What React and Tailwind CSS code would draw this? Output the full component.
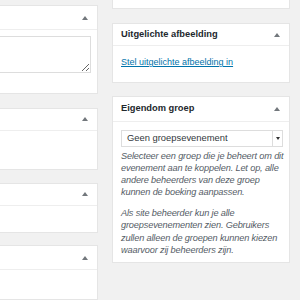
import React from "react";

const Arrow = () => (
  <svg width="6" height="4" viewBox="0 0 6 4" className="shrink-0">
    <path d="M0 4 L3 0 L6 4 Z" fill="#72777c" />
  </svg>
);

function Box({ headerH, children, className = "" }) {
  return (
    <div className={`bg-white border border-[#e5e5e5] ${className}`}>
      <div className={`flex items-center justify-end pr-[9px] border-b border-[#eeeeee] ${headerH}`}>
        <Arrow />
      </div>
      {children}
    </div>
  );
}

const Lines = ({ lines, className }) => (
  <p className={className}>
    {lines.map((l) => (
      <span key={l} className="block whitespace-nowrap">{l}</span>
    ))}
  </p>
);

export default function App() {
  return (
    <div
      className="w-[300px] h-[300px] overflow-hidden bg-[#f1f1f1] flex"
      style={{ fontFamily: '"Liberation Sans", Arial, sans-serif' }}
    >
      <div className="w-[198px] ml-[-100px] shrink-0 flex flex-col">
        <Box headerH="h-[24px]" className="mt-[5px] h-[97px]">
          <div className="pt-[6px] pl-[8px] pr-[6px]">
            <textarea className="block w-full h-[37px] border border-[#dddddd] bg-white resize-y" />
          </div>
        </Box>
        <Box headerH="h-[22px]" className="mt-[14px] h-[68px]" />
        <Box headerH="h-[22px]" className="mt-[13px] h-[55px]" />
        <Box headerH="h-[24px]" className="mt-[12px] h-[60px]" />
      </div>
      <div className="w-[178px] ml-[14px] shrink-0 flex flex-col">
        <div className="bg-white border border-[#e5e5e5] h-[10px] mt-[-1px]" />
        <div className="bg-white border border-[#e5e5e5] mt-[14px] h-[60px]">
          <div className="flex items-center justify-between pl-[8px] pr-[9px] h-[22px] border-b border-[#eeeeee]">
            <span className="text-[9.3px] font-semibold text-[#23282d] leading-none">Uitgelichte afbeelding</span>
            <Arrow />
          </div>
          <div className="pl-[8px] pt-[11px] leading-none">
            <a className="block text-[9px] text-[#0073aa] underline leading-[10px]">Stel uitgelichte afbeelding in</a>
          </div>
        </div>
        <div className="bg-white border border-[#e5e5e5] mt-[13px] h-[167px]">
          <div className="flex items-center justify-between pl-[8px] pr-[9px] h-[25px] border-b border-[#eeeeee]">
            <span className="text-[9.3px] font-semibold text-[#23282d] leading-none">Eigendom groep</span>
            <Arrow />
          </div>
          <div className="pl-[8px] pr-[2px] pt-[8px]">
            <div className="flex h-[17px] mr-[4px] border border-[#dddddd] bg-white">
              <div className="flex-1 flex items-center pl-[5px] text-[9.4px] text-[#32373c]">Geen groepsevenement</div>
              <div className="w-[10px] border-l border-[#dddddd] flex items-center justify-center">
                <svg width="4" height="3" viewBox="0 0 4 3"><path d="M0 0 L4 0 L2 3 Z" fill="#333" /></svg>
              </div>
            </div>
            <Lines
              className="mt-[3px] text-[9.2px] tracking-[-0.15px] italic text-[#555d66] leading-[12px]"
              lines={[
                "Selecteer een groep die je beheert om dit",
                "evenement aan te koppelen. Let op, alle",
                "andere beheerders van deze groep",
                "kunnen de boeking aanpassen.",
              ]}
            />
            <Lines
              className="mt-[9px] text-[9.2px] tracking-[-0.15px] italic text-[#555d66] leading-[12.3px]"
              lines={[
                "Als site beheerder kun je alle",
                "groepsevenementen zien. Gebruikers",
                "zullen alleen de groepen kunnen kiezen",
                "waarvoor zij beheerders zijn.",
              ]}
            />
          </div>
        </div>
      </div>
    </div>
  );
}
